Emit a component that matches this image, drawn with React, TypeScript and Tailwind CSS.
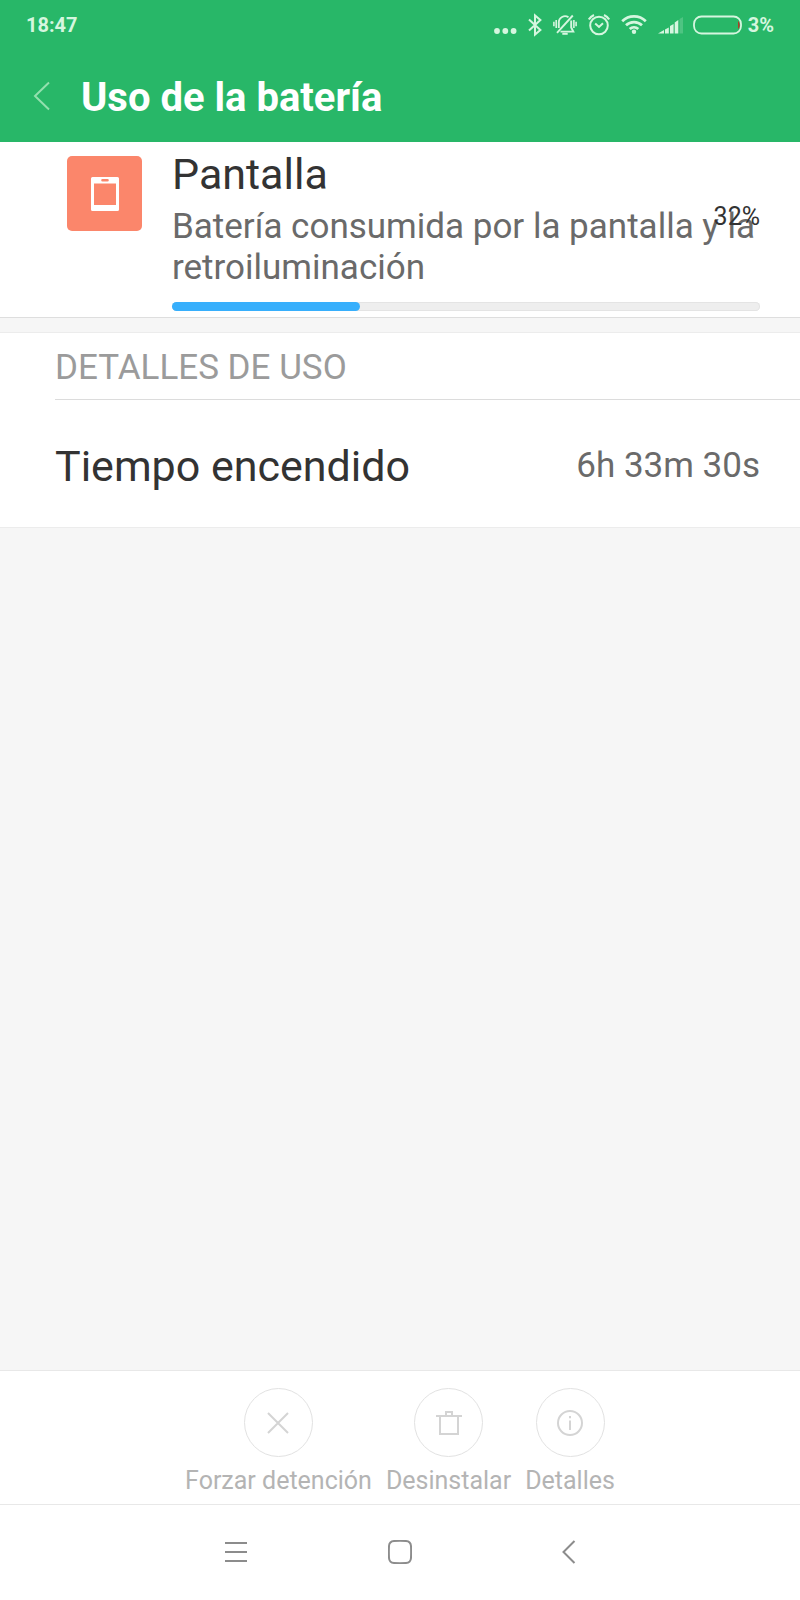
import React from 'react';

const USAGE_PERCENT = 32;

function StatusIcons() {
  return (
    <div className="flex items-center text-[#d5f6df]" aria-label="Estado del dispositivo">
      <svg width="23" height="24" viewBox="0 0 23 24" fill="currentColor" aria-hidden="true">
        <circle cx="3" cy="18" r="2.9" />
        <circle cx="11.3" cy="18" r="2.9" />
        <circle cx="19.6" cy="18" r="2.9" />
      </svg>
      <svg className="ml-[11px]" width="14" height="24" viewBox="0 0 14 24" fill="none" stroke="currentColor" strokeWidth="2" aria-hidden="true">
        <path d="M1 6.5 12.4 17 7 21.6V2.4L12.4 7 1 17.5" />
      </svg>
      <svg className="ml-[11px]" width="24" height="24" viewBox="0 0 24 24" fill="none" stroke="currentColor" strokeWidth="1.9" aria-hidden="true">
        <path d="M5.8 15V9.6A6.2 6.2 0 0 1 15.5 4.3M18.2 7.5V14.5L20.3 18.6H7.5" />
        <path d="M19.8 2.5 4 19.8" />
        <path d="M9.3 20.8h5.4" strokeWidth="2" />
        <path d="M3.2 7v8M20.9 7v8M.9 8.8v4.4M23.1 8.8v4.4" strokeWidth="1.6" />
      </svg>
      <svg className="ml-[11px]" width="22" height="24" viewBox="0 0 22 24" fill="none" stroke="currentColor" strokeWidth="2" aria-hidden="true">
        <circle cx="11" cy="12.5" r="8.8" />
        <path d="M7.2 10.6 11 14l4-3.8" />
        <path d="M.9 6.5A11 11 0 0 1 6 2M16 2A11 11 0 0 1 21.1 6.5" strokeWidth="2.2" />
      </svg>
      <svg className="ml-[11px]" width="26" height="24" viewBox="0 0 26 24" fill="none" stroke="currentColor" strokeWidth="2.7" aria-hidden="true">
        <path d="M1.2 8.2a17 17 0 0 1 23.6 0M5 12.3a11.6 11.6 0 0 1 16 0M8.7 16a6.3 6.3 0 0 1 8.6 0" />
        <circle cx="13" cy="18.8" r="2.2" fill="currentColor" stroke="none" />
      </svg>
      <svg className="ml-[11px]" width="26" height="24" viewBox="0 0 26 24" fill="currentColor" aria-hidden="true">
        <path d="M0 20.5 6 17v3.5zM7 16.5l3.8-2v6H7zM12 13l3.6-2v9.5H12zM16.7 9.5l3.6-2.5v13.500h-3.600z" />
        <path d="M21.5 6 25 4v16.500h-3.500z" opacity=".22" />
      </svg>
      <svg className="ml-[9px]" width="49" height="24" viewBox="0 0 49 24" fill="none" aria-hidden="true">
        <rect x="1" y="3.5" width="47" height="17" rx="7.5" stroke="currentColor" strokeWidth="1.8" />
        <path d="M45 8.500h1q1.600 3.500 0 7h-1z" fill="#b03c28" />
      </svg>
      <span className="ml-1.5 text-xl font-bold">3%</span>
    </div>
  );
}

function ActionButton({ label, children }: { label: string; children: React.ReactNode }) {
  return (
    <button type="button" disabled className="flex flex-col items-center gap-[9px] text-[#b4b4b4]">
      <span className="flex size-[69px] items-center justify-center rounded-full border border-[#e2e2e2] text-[#d4d4d4]">
        {children}
      </span>
      <span className="text-[25px] leading-[30px]">{label}</span>
    </button>
  );
}

export default function App() {
  return (
    <div className="flex min-h-screen flex-col bg-[#f6f6f6] font-['Roboto',sans-serif] text-[#333333]">
      <header className="bg-[#28b768]">
        <div className="flex h-[50px] items-center justify-between px-[26px] text-[#d5f6df]">
          <time className="text-xl font-bold">18:47</time>
          <StatusIcons />
        </div>
        <div className="flex h-[92px] items-center gap-[30px] pt-1 pl-8">
          <button type="button" aria-label="Volver" className="pb-1 text-[#93e0ae]">
            <svg width="19" height="30" viewBox="0 0 19 30" fill="none" stroke="currentColor" strokeWidth="2">
              <path d="M17 1.5 3 15 17 28.5" />
            </svg>
          </button>
          <h1 className="text-[40px] leading-[48px] font-bold text-white">Uso de la batería</h1>
        </div>
      </header>

      <main className="flex grow flex-col">
        <section className="relative flex gap-[30px] border-b border-[#dedede] bg-white pt-1.5 pr-10 pb-1.5 pl-[67px]">
          <div className="mt-2 flex size-[75px] shrink-0 items-center justify-center rounded-[5px] bg-[#fb866b]">
            <svg width="28" height="34" viewBox="0 0 28 34" aria-hidden="true">
              <path fillRule="evenodd" fill="#fff" d="M1.5 0h25A1.5 1.5 0 0 1 28 1.5v31a1.5 1.5 0 0 1-1.5 1.5h-25A1.5 1.5 0 0 1 0 32.5v-31A1.5 1.5 0 0 1 1.5 0zM3 6.5V28h22V6.5zM11.5 2a1.3 1.3 0 0 0 0 2.6h5a1.3 1.3 0 0 0 0-2.6z" />
            </svg>
          </div>
          <div className="min-w-0 grow">
            <h2 className="text-[43px] leading-[52px]">Pantalla</h2>
            <p className="mt-1.5 text-[35px] leading-[41px] text-[#6a6a6a]">
              Batería consumida por la pantalla y la retroiluminación
            </p>
            <div
              role="progressbar"
              aria-label="Consumo de batería"
              aria-valuenow={USAGE_PERCENT}
              aria-valuemin={0}
              aria-valuemax={100}
              className="mt-3.5 h-[9px] rounded-full bg-[#eeeeee] shadow-[inset_0_0_0_1px_#e4e4e4]"
            >
              <div className="h-full rounded-full bg-[#37affc]" style={{ width: `${USAGE_PERCENT}%` }} />
            </div>
          </div>
          <span className="absolute top-[60px] right-10 text-[25px] leading-[30px]">{USAGE_PERCENT}%</span>
        </section>

        <section className="mt-[14px] border-y border-[#ececec] bg-white">
          <h3 className="ml-[55px] border-b border-[#dcdcdc] pt-3.5 pb-[11px] text-[35px] leading-[41px] text-[#9b9b9b]">
            DETALLES DE USO
          </h3>
          <dl className="flex h-[127px] items-center justify-between pt-1 pr-10 pl-[55px]">
            <dt className="text-[43px] leading-[52px]">Tiempo encendido</dt>
            <dd className="text-[35px] leading-[41px] text-[#6a6a6a]">6h 33m 30s</dd>
          </dl>
        </section>
      </main>

      <footer className="bg-white">
        <div className="flex justify-center gap-3.5 border-y border-[#e8e8e8] pt-[17px] pb-2">
          <ActionButton label="Forzar detención">
            <svg width="22" height="22" viewBox="0 0 22 22" fill="none" stroke="currentColor" strokeWidth="2">
              <path d="M1 1l20 20M21 1 1 21" />
            </svg>
          </ActionButton>
          <ActionButton label="Desinstalar">
            <svg width="28" height="26" viewBox="0 0 28 26" fill="none" stroke="currentColor" strokeWidth="2">
              <path d="M1 6h26M5 6v18h18V6M11 6V2h6v4" />
            </svg>
          </ActionButton>
          <ActionButton label="Detalles">
            <svg width="26" height="26" viewBox="0 0 26 26" fill="none" stroke="currentColor" strokeWidth="2">
              <circle cx="13" cy="13" r="12" />
              <path d="M13 10.5V20M13 6v2.2" />
            </svg>
          </ActionButton>
        </div>
        <nav aria-label="Navegación" className="flex h-[95px] items-center justify-center pb-0.5 text-[#8c8c8c]">
          <button type="button" aria-label="Recientes" className="flex w-[164px] justify-center">
            <svg width="22" height="24" viewBox="0 0 22 24" fill="none" stroke="currentColor" strokeWidth="2">
              <path d="M0 3h22M0 12h22M0 21h22" />
            </svg>
          </button>
          <button type="button" aria-label="Inicio" className="flex w-[164px] justify-center">
            <svg width="24" height="24" viewBox="0 0 24 24" fill="none" stroke="currentColor" strokeWidth="2">
              <path d="M6 1Q12 .7 18 1 22.7 1.3 23 6q.3 6 0 12-.3 4.7-5 5-6 .3-12 0-4.7-.3-5-5-.3-6 0-12Q1.3 1.3 6 1z" />
            </svg>
          </button>
          <button type="button" aria-label="Atrás" className="flex w-[164px] justify-center">
            <svg width="24" height="24" viewBox="0 0 24 24" fill="none" stroke="currentColor" strokeWidth="2">
              <path d="M22.5 1 11.5 12l11 11" />
            </svg>
          </button>
        </nav>
      </footer>
    </div>
  );
}
